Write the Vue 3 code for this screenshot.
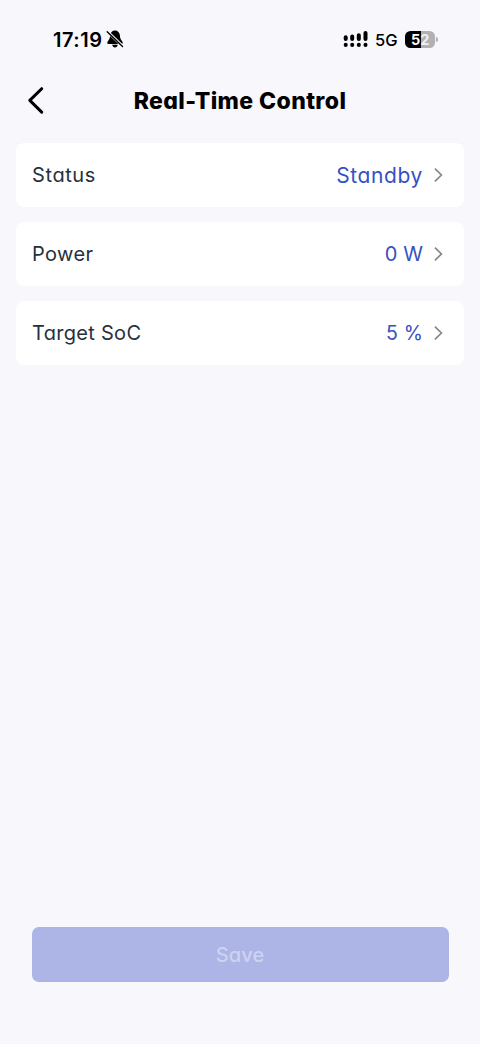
<script setup>
const rows = [
  { label: 'Status', value: 'Standby', key: 'status' },
  { label: 'Power', value: '0 W', key: 'power' },
  { label: 'Target SoC', value: '5 %', key: 'target' },
]
</script>

<template>
  <main class="screen">
    <header class="statusbar">
      <div class="clock">
        <span class="time">17:19</span>
        <svg class="bell" width="18" height="18" viewBox="0 0 18 18">
          <path d="M9 .5C6.3 .5 4.3 2.6 4.1 5.3C3.9 8.6 3.4 9.4 1.7 11.5C.8 12.7 1.2 13.9 2.6 13.9H15.4C16.8 13.9 17.2 12.7 16.3 11.5C14.6 9.4 14.1 8.6 13.9 5.3C13.7 2.6 11.7 .5 9 .5Z" />
          <path d="M6.2 14.8H11.8C11.4 16.6 10.4 17.4 9 17.4S6.6 16.6 6.2 14.8Z" />
          <path d="M1.6 1.7L17 16.5" stroke="#f7f7fc" stroke-width="2.8" />
          <path d="M1.2 1.7L16.5 16.4" stroke="#000" stroke-width="1.4" stroke-linecap="round" />
        </svg>
      </div>
      <div class="indicators">
        <svg width="25" height="18" viewBox="0 0 25 18" fill="none" stroke="#000" stroke-width="4" stroke-linecap="round">
          <path d="M2.7 7.3V8.9M9.2 6.5V8.9M15.8 5.2V8.9M22.5 2.9V8.9" />
          <path d="M2.7 14.8V15M9.2 14.8V15M15.8 14.8V15M22.5 14.8V15" />
        </svg>
        <span class="network">5G</span>
        <div class="battery"><span class="level">5</span><span class="rest">2</span></div>
        <i class="cap"></i>
      </div>
    </header>

    <nav class="navbar">
      <svg class="back" width="20" height="30" viewBox="0 0 20 30" fill="none" stroke="#000" stroke-width="3" stroke-linecap="round" stroke-linejoin="round">
        <path d="M14.7 2.7L2.8 14.4L14.7 26.1" />
      </svg>
      <h1>Real-Time Control</h1>
    </nav>

    <section class="rows">
      <div v-for="row in rows" :key="row.key" class="row">
        <span class="label" :class="row.key">{{ row.label }}</span>
        <span class="value" :class="row.key">{{ row.value }}</span>
        <svg class="chevron" width="10" height="16" viewBox="0 0 10 16" fill="none" stroke="#85878d" stroke-width="1.7">
          <path d="M.9 1.7L7.4 8L.9 14.3" />
        </svg>
      </div>
    </section>

    <footer><button disabled>Save</button></footer>
  </main>
</template>

<style>
body { background: #f7f7fc; }
</style>

<style scoped>
.screen {
  box-sizing: border-box;
  display: flex;
  flex-direction: column;
  height: 1044px;
  background: #f7f7fc;
  color: #000;
  font-family: Inter, "Liberation Sans", sans-serif;
}
.statusbar {
  box-sizing: border-box;
  display: flex;
  justify-content: space-between;
  height: 78px;
  padding: 28.5px 44px 0 53px;
}
.clock, .indicators { display: flex; align-items: center; height: 21px; }
.time { width: 53px; padding-top: 1px; font-size: 20px; font-weight: 600; letter-spacing: .5px; }
.network { margin-left: 7px; width: 30px; padding-top: 1px; font-size: 16.5px; font-weight: 450; }
.battery {
  display: flex;
  width: 30px;
  height: 17px;
  overflow: hidden;
  border-radius: 5.5px;
  background: linear-gradient(to right, #000 52%, #b1b1b4 52%);
  color: #fff;
  font-size: 14.5px;
  line-height: 17px;
  font-weight: 700;
}
.level { width: 15.3px; padding-left: 6px; box-sizing: border-box; }
.rest { color: #f0f0f4; }
.cap { width: 2px; height: 5px; margin: 0 -2px 0 1px; border-radius: 0 2px 2px 0; background: #b1b1b4; }
.navbar {
  display: grid;
  grid-template-columns: 80px 1fr 80px;
  align-items: center;
  height: 45px;
  margin-bottom: 19.5px;
}
.back { margin-left: 27px; }
h1 {
  margin: 0;
  text-align: center;
  white-space: nowrap;
  font-size: 23px;
  font-weight: 800;
  letter-spacing: .4px;
  font-feature-settings: "cv11";
}
.rows { display: flex; flex-direction: column; gap: 15.3px; padding: 0 16px; }
.row {
  box-sizing: border-box;
  display: flex;
  align-items: center;
  height: 64px;
  padding: 0 20px 0 16px;
  border-radius: 8px;
  background: #fff;
}
.label, .value { font-feature-settings: "cv11"; font-size: 20px; line-height: 28px; }
.label { flex: 1; color: #26313e; letter-spacing: .4px; }
.label.status { letter-spacing: .6px; }
.label.target { letter-spacing: .3px; }
.value { color: #3451c3; }
.value.status { padding-top: 2px; font-size: 21px; letter-spacing: .6px; }
.value.power { font-size: 20px; letter-spacing: -.4px; word-spacing: 1px; }
.value.target { font-size: 19.5px; letter-spacing: -.5px; word-spacing: 1.4px; }
.chevron { margin-left: 11px; }
.value:not(.status) + .chevron { margin-left: 11.5px; }
footer { margin-top: auto; padding: 0 31.5px 62.5px; }
button {
  display: block;
  width: 100%;
  height: 54.5px;
  padding: 1px 0 0;
  border: 0;
  border-radius: 7px;
  background: #acb5e6;
  color: #cdd3f0;
  font: 500 20px Inter, sans-serif;
  letter-spacing: .1px;
  font-feature-settings: "cv11";
}
</style>
